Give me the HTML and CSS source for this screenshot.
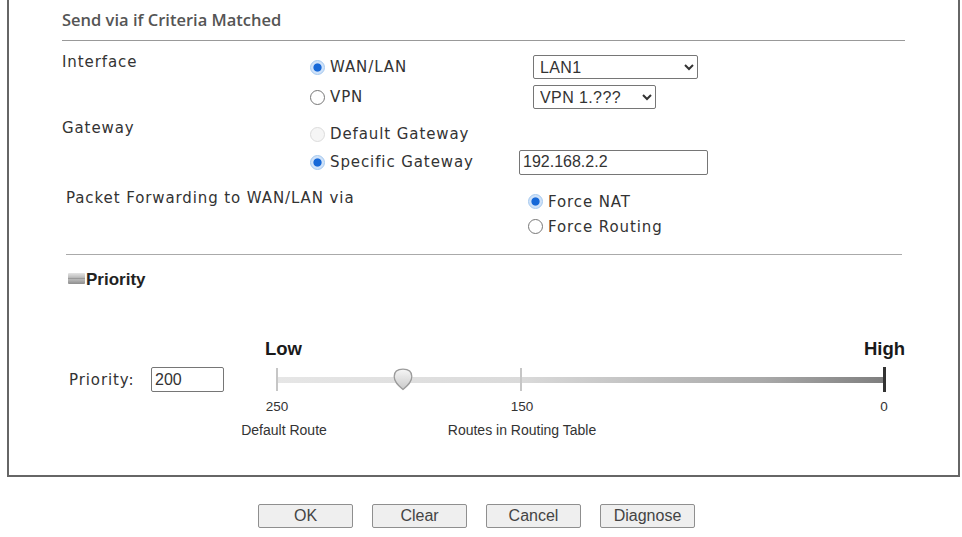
FILE: index.html
```html
<!DOCTYPE html>
<html lang="en">
<head>
    <meta charset="UTF-8">
    <meta name="viewport" content="width=device-width, initial-scale=1.0">
    <title>Route Policy</title>
    <link rel="stylesheet" href="styles.css">
</head>
<body>
    <div class="panel">
        <div class="section-title">Send via if Criteria Matched</div>

        <div class="field field-iface">
            <div class="field-label">Interface</div>
            <label class="opt"><input type="radio" name="iface" checked>WAN/LAN</label>
            <select class="sel sel-lan"><option>LAN1</option><option>LAN2</option><option>WAN1</option></select>
            <label class="opt"><input type="radio" name="iface">VPN</label>
            <select class="sel sel-vpn"><option>VPN 1.???</option></select>
        </div>

        <div class="field field-gw">
            <div class="field-label">Gateway</div>
            <label class="opt opt-off"><input type="radio" name="gw" disabled>Default Gateway</label>
            <label class="opt opt-second"><input type="radio" name="gw" checked>Specific Gateway</label>
            <input type="text" class="gw-ip" value="192.168.2.2">
        </div>

        <div class="field field-fwd">
            <div class="field-label">Packet Forwarding to WAN/LAN via</div>
            <label class="opt opt-wide"><input type="radio" name="fwd" checked>Force NAT</label>
            <label class="opt opt-wide"><input type="radio" name="fwd">Force Routing</label>
        </div>

        <div class="divider"></div>

        <div class="prio-head">
            <span class="toggle-icon"></span>
            <span>Priority</span>
        </div>

        <div class="prio-body">
            <div class="prio-left">
                <label class="prio-label" for="prio">Priority:</label>
                <input type="text" id="prio" class="prio-input" value="200">
            </div>
            <div class="scale">
                <div class="scale-ends"><b>Low</b><b>High</b></div>
                <div class="track-wrap">
                    <div class="track"></div>
                    <span class="tick" style="left: 0px"></span>
                    <span class="tick" style="left: 244px"></span>
                    <span class="tick tick-end" style="left: 608px"></span>
                    <svg class="thumb" width="20" height="23" viewBox="0 0 20 23">
                        <defs>
                            <linearGradient id="thumbFill" x1="0" y1="0" x2="0" y2="1">
                                <stop offset="0" stop-color="#f6f6f6"/>
                                <stop offset="1" stop-color="#c9c9c9"/>
                            </linearGradient>
                        </defs>
                        <path d="M10 21.5 C6 18 1.2 14.5 1.2 8.5 C1.2 3.5 4.5 1.2 10 1.2 C15.5 1.2 18.8 3.5 18.8 8.5 C18.8 14.5 14 18 10 21.5 Z" fill="url(#thumbFill)" stroke="#9b9b9b" stroke-width="1.3"/>
                    </svg>
                </div>
                <div class="marks">
                    <span style="left: 0px">250</span>
                    <span style="left: 245px">150</span>
                    <span style="left: 607px">0</span>
                </div>
                <div class="captions">
                    <span style="left: 7px">Default Route</span>
                    <span style="left: 245px">Routes in Routing Table</span>
                </div>
            </div>
        </div>
    </div>

    <div class="actions">
        <button>OK</button>
        <button>Clear</button>
        <button>Cancel</button>
        <button>Diagnose</button>
    </div>
</body>
</html>
```

FILE: styles.css
```css
body {
    margin: 0;
    background: #fff;
    color: #333;
    font-family: "DejaVu Sans", Verdana, sans-serif;
}
.panel {
    margin-left: 7px;
    width: 843px;
    padding: 0 53px 37px;
    border: 2px solid #666;
    border-top: none;
}
.section-title {
    height: 40px;
    line-height: 40px;
    border-bottom: 1px solid #999;
    font-family: "Open Sans", sans-serif;
    font-weight: 600;
    font-size: 16.5px;
    color: #555;
}

/* label + options rows */
.field {
    display: grid;
    align-items: center;
    font-size: 15px;
    letter-spacing: 0.9px;
}
.field-label {
    grid-row: span 2;
    align-self: start;
    line-height: 20px;
}
.field-iface {
    margin-top: 11px;
    grid-template-columns: 248px 223px 1fr;
    grid-template-rows: 30px 30px;
}
.field-gw {
    margin-top: 6px;
    padding-top: 2px;
    grid-template-columns: 248px 209px 1fr;
    grid-template-rows: 28px 28px;
}
.field-gw .field-label {
    margin-top: -2px;
}
.field-fwd {
    margin-top: 12px;
    padding: 1px 0 0 4px;
    grid-template-columns: 462px 1fr;
    grid-template-rows: 25px 25px;
}
.field-fwd .field-label {
    margin-top: -1px;
}
.opt {
    display: flex;
    align-items: center;
}
.opt-second {
    grid-column: 2;
}
.opt-wide input {
    margin-right: 10px;
}
.opt input {
    appearance: none;
    width: 15px;
    height: 15px;
    margin: 0 5px 0 0;
    border: 1px solid #777;
    border-radius: 50%;
    background: #fff;
}
.opt input:checked {
    border-color: #a4c8ef;
    background: radial-gradient(circle, #1668d8 0 3.6px, #cfe2f9 4.6px);
}
.opt input:disabled {
    border-color: #dcdcdc;
    background: #f5f5f5;
}
.sel {
    height: 24px;
    font-family: "Liberation Sans", Arial, sans-serif;
    font-size: 16px;
    letter-spacing: 0.4px;
    color: #333;
    background: #fff;
    border: 1px solid #767676;
    border-radius: 2px;
    padding: 0 2px;
}
.sel-lan {
    width: 165px;
}
.sel-vpn {
    width: 123px;
}
.gw-ip {
    grid-column: 3;
    grid-row: 2;
    width: 181px;
    height: 23px;
    padding: 0 3px;
    font-family: "Liberation Sans", Arial, sans-serif;
    font-size: 16px;
    color: #333;
    border: 1px solid #767676;
    border-radius: 2px;
}
.divider {
    margin: 15px 3px 0 4px;
    border-top: 1px solid #aaa;
}

/* priority block */
.prio-head {
    display: flex;
    align-items: center;
    margin-top: 13px;
    padding-left: 6px;
    height: 24px;
    font-family: "Liberation Sans", Arial, sans-serif;
    font-weight: bold;
    font-size: 17px;
    color: #222;
}
.toggle-icon {
    width: 17px;
    height: 11px;
    margin: -4px 1px 0 0;
    border-radius: 1px;
    background: linear-gradient(#e4e4e4, #bdbdbd 40%, #9a9a9a 50%, #b8b8b8 60%, #8d8d8d);
}
.prio-body {
    display: flex;
    margin-top: 46px;
    padding-left: 7px;
}
.prio-left {
    display: flex;
    align-items: center;
    width: 208px;
    height: 25px;
    margin-top: 29px;
    font-size: 15px;
    letter-spacing: 0.9px;
}
.prio-label {
    width: 82px;
}
.prio-input {
    width: 65px;
    height: 23px;
    padding: 0 3px;
    font-family: "Liberation Sans", Arial, sans-serif;
    font-size: 16px;
    color: #333;
    border: 1px solid #767676;
    border-radius: 2px;
}
.scale {
    width: 608px;
    font-family: "Liberation Sans", Arial, sans-serif;
}
.scale-ends {
    display: flex;
    justify-content: space-between;
    margin: 0 -20px 0 -12px;
    height: 22px;
    line-height: 22px;
    font-size: 18.5px;
    color: #1a1a1a;
}
.track-wrap {
    position: relative;
    height: 34px;
}
.track {
    position: absolute;
    top: 17px;
    left: 0;
    right: 0;
    height: 6px;
    background: linear-gradient(to right, #e6e6e6, #dadada 40%, #a9a9a9 80%, #7e7e7e);
}
.tick {
    position: absolute;
    top: 8px;
    width: 2px;
    height: 23px;
    margin-left: -1px;
    background: #c6c6c6;
}
.tick-end {
    top: 7px;
    width: 3px;
    height: 25px;
    margin-left: -2px;
    background: #333;
}
.thumb {
    position: absolute;
    top: 8px;
    left: 116px;
}
.marks,
.captions {
    position: relative;
    height: 16px;
    line-height: 16px;
}
.marks {
    margin-top: 5px;
    font-size: 13.5px;
}
.captions {
    margin-top: 7px;
    font-size: 14px;
}
.marks span,
.captions span {
    position: absolute;
    top: 0;
    transform: translateX(-50%);
    white-space: nowrap;
}

.actions {
    display: flex;
    gap: 19px;
    margin-top: 27px;
    padding-left: 258px;
}
.actions button {
    width: 95px;
    height: 24px;
    font-family: "Liberation Sans", Arial, sans-serif;
    font-size: 16px;
    color: #444;
    background: #efefef;
    border: 1px solid #8f8f8f;
    border-radius: 2px;
}
```
